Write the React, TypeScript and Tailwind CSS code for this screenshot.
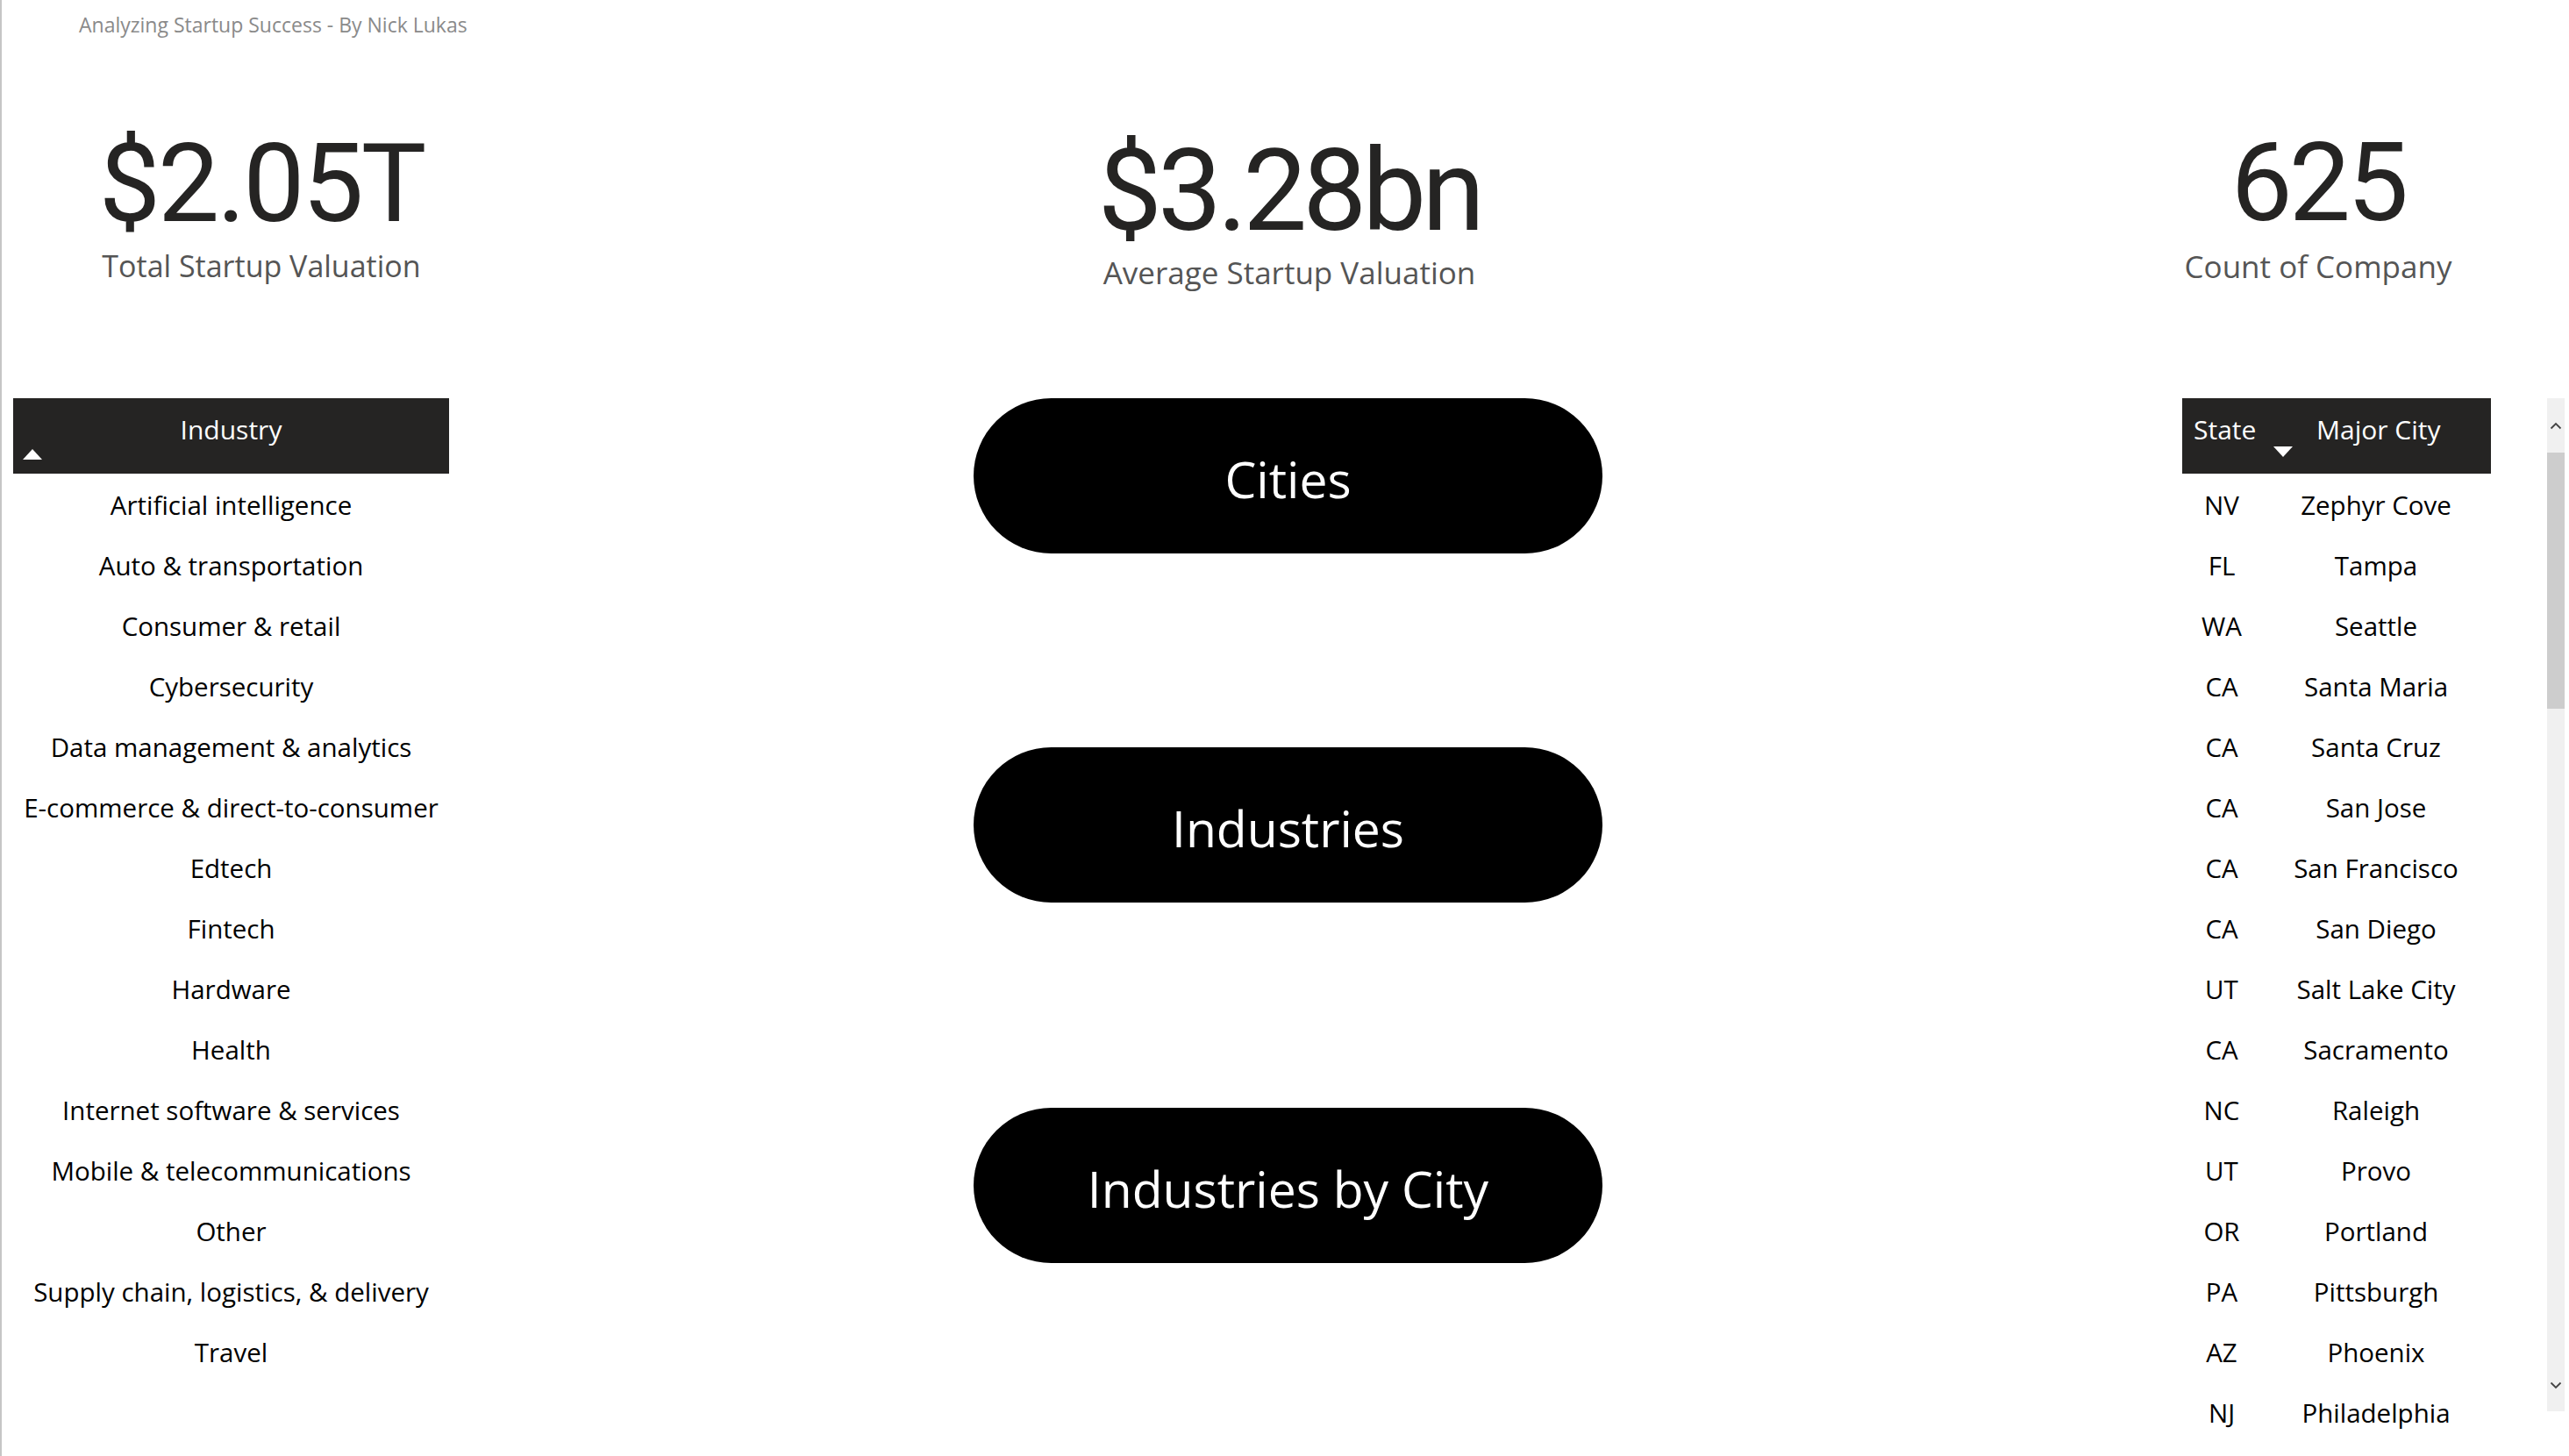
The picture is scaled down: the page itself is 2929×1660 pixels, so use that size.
const industries = [
  'Artificial intelligence',
  'Auto & transportation',
  'Consumer & retail',
  'Cybersecurity',
  'Data management & analytics',
  'E-commerce & direct-to-consumer',
  'Edtech',
  'Fintech',
  'Hardware',
  'Health',
  'Internet software & services',
  'Mobile & telecommunications',
  'Other',
  'Supply chain, logistics, & delivery',
  'Travel',
]

const cities: [string, string][] = [
  ['NV', 'Zephyr Cove'],
  ['FL', 'Tampa'],
  ['WA', 'Seattle'],
  ['CA', 'Santa Maria'],
  ['CA', 'Santa Cruz'],
  ['CA', 'San Jose'],
  ['CA', 'San Francisco'],
  ['CA', 'San Diego'],
  ['UT', 'Salt Lake City'],
  ['CA', 'Sacramento'],
  ['NC', 'Raleigh'],
  ['UT', 'Provo'],
  ['OR', 'Portland'],
  ['PA', 'Pittsburgh'],
  ['AZ', 'Phoenix'],
  ['NJ', 'Philadelphia'],
]

function Pill({ label }: { label: string }) {
  return (
    <button className="w-[717px] h-[177px] rounded-full bg-black text-white flex items-center justify-center text-[57px] leading-none pt-[8px]">
      {label}
    </button>
  )
}

function Chevron({ down }: { down?: boolean }) {
  return (
    <svg width="14" height="9" viewBox="0 0 14 9" className={down ? 'rotate-180' : ''}>
      <path d="M1.5 7.5 L7 2 L12.5 7.5" fill="none" stroke="#444" strokeWidth="1.8" />
    </svg>
  )
}

export default function App() {
  return (
    <div className="w-[2929px] h-[1660px] overflow-hidden bg-white border-l-2 border-[#c6c6c6] font-['Open_Sans',sans-serif]">
      <div className="h-[56px] flex items-center pl-[88px] text-[23px] text-[#8a8a8a]">
        Analyzing Startup Success - By Nick Lukas
      </div>

      {/* cards */}
      <div className="h-[398px] flex items-start">
        <div className="w-[592px] flex flex-col items-center">
          <div className="mt-[94px] font-['Roboto',sans-serif] text-[125px] leading-[120px] tracking-[-3px] text-[#252423]">$2.05T</div>
          <div className="mt-[16px] text-[34px] leading-[34px] text-[#555]">Total Startup Valuation</div>
        </div>
        <div className="w-[1752px] flex flex-col items-center">
          <div className="mt-[101px] font-['Roboto',sans-serif] text-[130px] leading-[122px] tracking-[-5px] text-[#252423]">$3.28bn</div>
          <div className="mt-[14px] text-[35px] leading-[35px] text-[#555]">Average Startup Valuation</div>
        </div>
        <div className="w-[583px] pl-[11px] flex flex-col items-center">
          <div className="mt-[93px] font-['Roboto',sans-serif] text-[125px] leading-[120px] tracking-[-4px] text-[#252423]">625</div>
          <div className="mt-[17px] text-[35px] leading-[35px] text-[#555]">Count of Company</div>
        </div>
      </div>

      {/* main */}
      <div className="flex items-start">
        {/* industry slicer table */}
        <div className="ml-[13px] w-[497px]">
          <div className="relative h-[86px] bg-[#252423] text-white text-[30px] leading-[30px] text-center pt-[21px]">
            Industry
            <div className="absolute left-[11px] top-[58px] w-0 h-0 border-l-[11px] border-r-[11px] border-b-[12px] border-l-transparent border-r-transparent border-b-white" />
          </div>
          <div className="mt-[2px]">
            {industries.map((name) => (
              <div key={name} className="h-[69px] flex items-center justify-center text-[29.5px] text-black">
                {name}
              </div>
            ))}
          </div>
        </div>

        {/* navigation buttons */}
        <div className="ml-[598px] flex flex-col">
          <Pill label="Cities" />
          <div className="mt-[221px]">
            <Pill label="Industries" />
          </div>
          <div className="mt-[234px]">
            <Pill label="Industries by City" />
          </div>
        </div>

        {/* city table */}
        <div className="ml-[661px] w-[352px]">
          <div className="relative h-[86px] bg-[#252423] text-white text-[30px] leading-[30px] flex pt-[21px]">
            <div className="pl-[13px] w-[153px]">State</div>
            <div>Major City</div>
            <div className="absolute left-[104px] top-[55px] w-0 h-0 border-l-[11px] border-r-[11px] border-t-[12px] border-l-transparent border-r-transparent border-t-white" />
          </div>
          <div className="mt-[2px]">
            {cities.map(([st, city], i) => (
              <div key={i} className="h-[69px] flex items-center text-[29.5px] text-black">
                <div className="w-[90px] text-center">{st}</div>
                <div className="flex-1 text-center">{city}</div>
              </div>
            ))}
          </div>
        </div>

        {/* scrollbar */}
        <div className="ml-[64px] w-[20px] h-[1155px] bg-[#f0f0f0] flex flex-col">
          <div className="h-[62px] flex items-center justify-center">
            <Chevron />
          </div>
          <div className="h-[292px] bg-[#cdcdcd]" />
          <div className="flex-1" />
          <div className="h-[60px] flex items-center justify-center">
            <Chevron down />
          </div>
        </div>
      </div>
    </div>
  )
}
